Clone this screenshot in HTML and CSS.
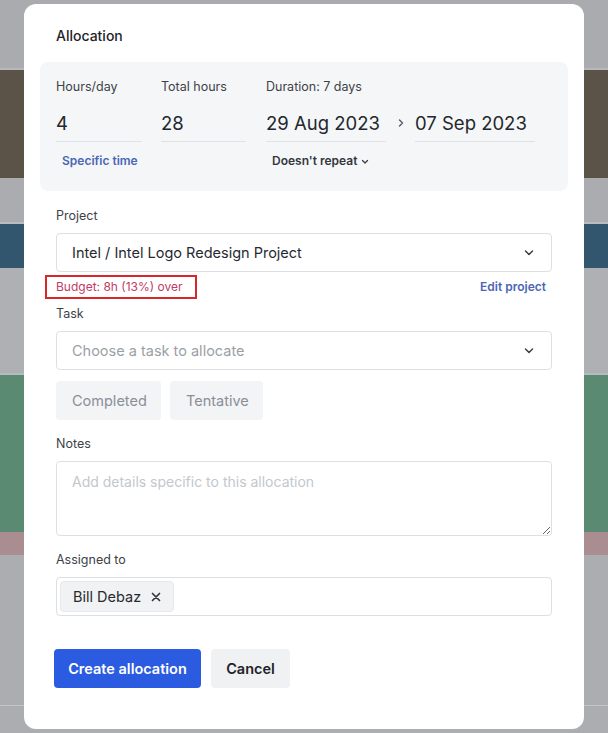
FILE: index.html
```html
<!DOCTYPE html>
<html lang="en">
<head>
<meta charset="utf-8">
<title>Allocation</title>
<link rel="stylesheet" href="styles.css">
</head>
<body>
<div class="backdrop">
  <div class="band b-gray1"></div>
  <div class="band b-brown"></div>
  <div class="band b-gray2"></div>
  <div class="band b-blue"></div>
  <div class="band b-gray3"></div>
  <div class="band b-green"></div>
  <div class="band b-pink"></div>
  <div class="band b-gray4"></div>
  <div class="band b-gray5"></div>
</div>

<div class="modal">
  <h1 class="title">Allocation</h1>

  <section class="panel">
    <div class="cols">
      <div class="col c-hours">
        <div class="plabel">Hours/day</div>
        <div class="pvalue">4</div>
        <div class="plink link-blue">Specific time</div>
      </div>
      <div class="col c-total">
        <div class="plabel">Total hours</div>
        <div class="pvalue">28</div>
      </div>
      <div class="col c-dates">
        <div class="plabel">Duration: 7 days</div>
        <div class="daterow">
          <div class="pvalue date">29 Aug 2023</div>
          <svg class="arrow" width="8" height="10" viewBox="0 0 8 10"><path d="M2.5 2 L5.5 5 L2.5 8" fill="none" stroke="#555a60" stroke-width="1.4" stroke-linecap="round" stroke-linejoin="round"/></svg>
          <div class="pvalue date">07 Sep 2023</div>
        </div>
        <div class="plink link-dark">Doesn't repeat
          <svg class="mini" width="8" height="6" viewBox="0 0 8 6"><path d="M1.5 1.5 L4 4 L6.5 1.5" fill="none" stroke="#3a3f45" stroke-width="1.3" stroke-linecap="round" stroke-linejoin="round"/></svg>
        </div>
      </div>
    </div>
  </section>

  <div class="form">
    <div class="label">Project</div>
    <div class="field select">
      <span class="val">Intel / Intel Logo Redesign Project</span>
      <svg class="chev" width="12" height="8" viewBox="0 0 12 8"><path d="M2.5 2 L6 5.5 L9.5 2" fill="none" stroke="#3a3f45" stroke-width="1.5" stroke-linecap="round" stroke-linejoin="round"/></svg>
    </div>
    <div class="meta">
      <span class="budget">Budget: 8h (13%) over</span>
      <span class="edit">Edit project</span>
    </div>

    <div class="label l-task">Task</div>
    <div class="field select">
      <span class="ph">Choose a task to allocate</span>
      <svg class="chev" width="12" height="8" viewBox="0 0 12 8"><path d="M2.5 2 L6 5.5 L9.5 2" fill="none" stroke="#3a3f45" stroke-width="1.5" stroke-linecap="round" stroke-linejoin="round"/></svg>
    </div>

    <div class="toggles">
      <button class="toggle t-completed">Completed</button>
      <button class="toggle t-tentative">Tentative</button>
    </div>

    <div class="label l-notes">Notes</div>
    <textarea class="notes" placeholder="Add details specific to this allocation"></textarea>

    <div class="label l-assigned">Assigned to</div>
    <div class="field assign">
      <span class="chip">Bill Debaz
        <svg class="x" width="10" height="10" viewBox="0 0 10 10"><path d="M1.5 1.5 L8.5 8.5 M8.5 1.5 L1.5 8.5" fill="none" stroke="#33383e" stroke-width="1.7" stroke-linecap="round"/></svg>
      </span>
    </div>

    <div class="actions">
      <button class="btn primary">Create allocation</button>
      <button class="btn secondary">Cancel</button>
    </div>
  </div>
</div>
</body>
</html>
```

FILE: styles.css
```css
* { box-sizing: border-box; }
html, body { margin: 0; padding: 0; }
body {
  width: 608px;
  height: 733px;
  overflow: hidden;
  font-family: Inter, "Noto Sans", "Liberation Sans", sans-serif;
  color: #1f2328;
  position: relative;
  background: #abadb1;
}

.backdrop { display: flex; flex-direction: column; }
.band { width: 100%; }
.b-gray1 { height: 70px; background: #a9abaf; border-bottom: 2px solid #b6b8bc; }
.b-brown { height: 108px; background: #5b5347; }
.b-gray2 { height: 46px; background: #aaacb0; border-bottom: 2px solid #b9bdc3; }
.b-blue { height: 44px; background: #33566f; }
.b-gray3 { height: 107px; background: #aeb0b4; border-bottom: 2px solid #b7bbbe; }
.b-green { height: 157px; background: #5a8b72; }
.b-pink { height: 23px; background: #a98d91; }
.b-gray4 { height: 151px; background: #abadb1; border-bottom: 1px solid #c2c4c7; }
.b-gray5 { height: 26px; background: #abadb1; }

.modal {
  position: absolute;
  left: 24px;
  top: 4px;
  width: 560px;
  height: 725px;
  background: #ffffff;
  border-radius: 12px;
  padding: 22px 16px 0;
}

.title {
  margin: 0 0 16px;
  padding-left: 16px;
  font-size: 14px;
  line-height: 20px;
  font-weight: 500;
  color: #1f2328;
}

.panel {
  background: #f5f6f8;
  border-radius: 8px;
  height: 129px;
  padding: 16px 16px 0;
}
.cols { display: flex; }
.col { display: flex; flex-direction: column; }
.c-hours { width: 86px; margin-right: 19px; }
.c-total { width: 85px; margin-right: 20px; }
.c-dates { width: 270px; }
.plabel {
  font-size: 12.5px;
  line-height: 18px;
  color: #3d4248;
}
.pvalue {
  margin-top: 8px;
  height: 38px;
  font-size: 18.5px;
  line-height: 38px;
  color: #23272c;
  border-bottom: 1px solid #dfe2e6;
}
.daterow { display: flex; align-items: center; }
.date { width: 120px; }
.arrow { margin: 8px 10px 0 11px; }
.plink {
  margin-top: 10px;
  padding-left: 6px;
  font-size: 12px;
  line-height: 18px;
  font-weight: 600;
}
.link-blue { color: #4a67b6; }
.link-dark { color: #33383e; display: flex; align-items: center; gap: 4px; }
.mini { margin-top: 1px; }

.form { padding: 0 16px; margin-top: 16px; }
.label {
  font-size: 12.5px;
  line-height: 18px;
  color: #3d4248;
  margin-bottom: 8px;
}
.field {
  height: 39px;
  border: 1px solid #dcdfe3;
  border-radius: 4px;
  background: #fff;
  display: flex;
  align-items: center;
}
.select { padding: 0 16px 0 15px; justify-content: space-between; }
.val { font-size: 14.5px; color: #262a2f; }
.ph { font-size: 14.5px; color: #9a9fa6; }
.chev { margin-right: 0; margin-top: 1px; }

.meta {
  display: flex;
  justify-content: space-between;
  align-items: center;
  height: 28px;
  padding-top: 1px;
}
.budget {
  margin-left: -11px;
  border: 2px solid #d9262b;
  height: 24px;
  padding: 0 12px 0 9px;
  display: flex;
  align-items: center;
  font-size: 12px;
  color: #c23a66;
}
.edit {
  font-size: 12px;
  font-weight: 600;
  color: #4a67b6;
  margin-right: 6px;
}
.l-task { margin-top: 5px; }

.toggles { display: flex; gap: 9px; margin-top: 11px; }
.toggle {
  font-family: inherit;
  height: 39px;
  border: none;
  border-radius: 4px;
  background: #f3f4f6;
  color: #8a8f97;
  font-size: 14.5px;
  padding: 0 16px;
}
.t-completed { width: 105px; }
.t-tentative { width: 93px; }

.l-notes { margin-top: 15px; }
.notes {
  display: block;
  width: 100%;
  height: 75px;
  border: 1px solid #dcdfe3;
  border-radius: 4px;
  padding: 11px 15px;
  font-family: inherit;
  font-size: 14px;
  resize: vertical;
  outline: none;
}
.notes::placeholder { color: #c3c7cc; }

.l-assigned { margin-top: 15px; }
.assign { padding: 0 3px; }
.chip {
  height: 31px;
  width: 114px;
  display: flex;
  align-items: center;
  padding-left: 12px;
  background: #f1f2f4;
  border: 1px solid #e6e8eb;
  border-radius: 4px;
  font-size: 14.5px;
  color: #262a2f;
}
.x { margin-left: 10px; margin-top: 1px; }

.actions { display: flex; gap: 10px; margin-top: 33px; margin-left: -2px; }
.btn {
  font-family: inherit;
  height: 39px;
  border: none;
  border-radius: 4px;
  font-size: 14.5px;
  font-weight: 600;
  padding: 0;
}
.primary { width: 147px; background: #2b5be0; color: #ffffff; }
.secondary { width: 79px; background: #f0f1f3; color: #1f2328; }
```
